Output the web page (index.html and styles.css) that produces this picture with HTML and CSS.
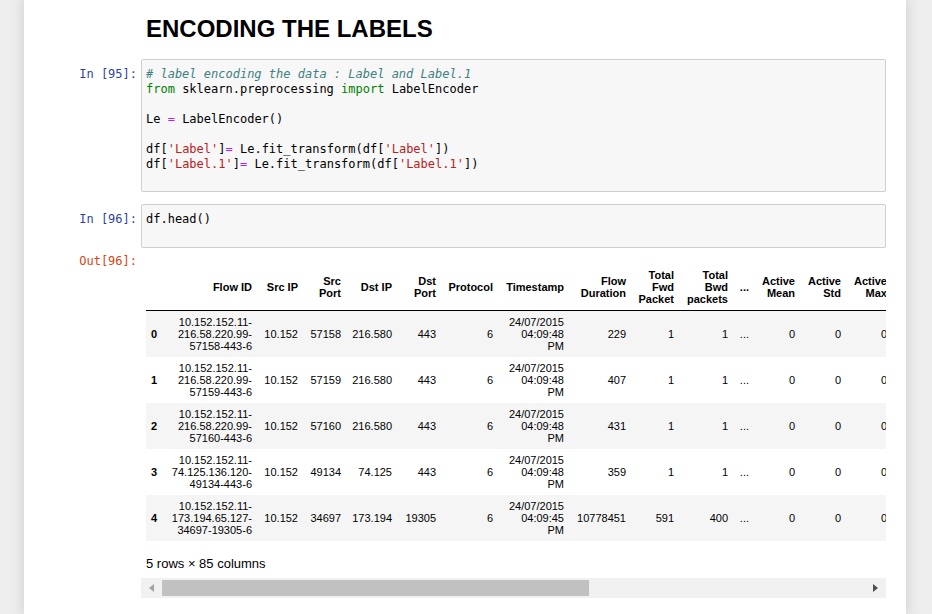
FILE: index.html
```html
<!DOCTYPE html>
<html lang="en">
<head>
<meta charset="utf-8">
<title>Notebook</title>
<link rel="stylesheet" href="styles.css">
</head>
<body>
<div class="notebook">
  <div class="cell md-cell">
    <div class="prompt"></div>
    <div class="area md-area"><h1 class="title">ENCODING THE LABELS</h1></div>
  </div>

  <div class="cell code-cell first">
    <div class="prompt in">In [95]:</div>
    <div class="area input"><pre class="code"><span class="cm">#&nbsp;label encoding the data : Label and Label.1</span>
<span class="kw">from</span> sklearn.preprocessing <span class="kw">import</span> LabelEncoder

Le <span class="op">=</span> LabelEncoder()

df[<span class="st">'Label'</span>]<span class="op">=</span> Le.fit_transform(df[<span class="st">'Label'</span>])
df[<span class="st">'Label.1'</span>]<span class="op">=</span> Le.fit_transform(df[<span class="st">'Label.1'</span>])
&nbsp;</pre></div>
  </div>

  <div class="cell code-cell second">
    <div class="prompt in">In [96]:</div>
    <div class="area input"><pre class="code">df.head()
&nbsp;</pre></div>
  </div>

  <div class="cell out-cell">
    <div class="prompt out">Out[96]:</div>
    <div class="area output">
      <div class="scroll-content">
        <table class="dataframe">
          <colgroup>
            <col class="c0"><col class="c1"><col class="c2"><col class="c3"><col class="c4"><col class="c5"><col class="c6"><col class="c7"><col class="c8"><col class="c9"><col class="c10"><col class="c11"><col class="c12"><col class="c13"><col class="c14">
          </colgroup>
          <thead>
            <tr>
              <th class="idx"></th>
              <th>Flow ID</th>
              <th>Src IP</th>
              <th>Src<br>Port</th>
              <th>Dst IP</th>
              <th>Dst<br>Port</th>
              <th>Protocol</th>
              <th>Timestamp</th>
              <th>Flow<br>Duration</th>
              <th>Total<br>Fwd<br>Packet</th>
              <th>Total<br>Bwd<br>packets</th>
              <th class="dots">...</th>
              <th>Active<br>Mean</th>
              <th>Active<br>Std</th>
              <th>Active<br>Max</th>
            </tr>
          </thead>
          <tbody>
            <tr>
              <th class="idx">0</th>
              <td>10.152.152.11-<br>216.58.220.99-<br>57158-443-6</td>
              <td>10.152</td><td>57158</td><td>216.580</td><td>443</td><td>6</td>
              <td>24/07/2015<br>04:09:48<br>PM</td>
              <td>229</td><td>1</td><td>1</td><td class="dots">...</td><td>0</td><td>0</td><td>0</td>
            </tr>
            <tr>
              <th class="idx">1</th>
              <td>10.152.152.11-<br>216.58.220.99-<br>57159-443-6</td>
              <td>10.152</td><td>57159</td><td>216.580</td><td>443</td><td>6</td>
              <td>24/07/2015<br>04:09:48<br>PM</td>
              <td>407</td><td>1</td><td>1</td><td class="dots">...</td><td>0</td><td>0</td><td>0</td>
            </tr>
            <tr>
              <th class="idx">2</th>
              <td>10.152.152.11-<br>216.58.220.99-<br>57160-443-6</td>
              <td>10.152</td><td>57160</td><td>216.580</td><td>443</td><td>6</td>
              <td>24/07/2015<br>04:09:48<br>PM</td>
              <td>431</td><td>1</td><td>1</td><td class="dots">...</td><td>0</td><td>0</td><td>0</td>
            </tr>
            <tr>
              <th class="idx">3</th>
              <td>10.152.152.11-<br>74.125.136.120-<br>49134-443-6</td>
              <td>10.152</td><td>49134</td><td>74.125</td><td>443</td><td>6</td>
              <td>24/07/2015<br>04:09:48<br>PM</td>
              <td>359</td><td>1</td><td>1</td><td class="dots">...</td><td>0</td><td>0</td><td>0</td>
            </tr>
            <tr>
              <th class="idx">4</th>
              <td>10.152.152.11-<br>173.194.65.127-<br>34697-19305-6</td>
              <td>10.152</td><td>34697</td><td>173.194</td><td>19305</td><td>6</td>
              <td>24/07/2015<br>04:09:45<br>PM</td>
              <td>10778451</td><td>591</td><td>400</td><td class="dots">...</td><td>0</td><td>0</td><td>0</td>
            </tr>
          </tbody>
        </table>
        <p class="shape">5 rows × 85 columns</p>
      </div>
      <div class="hscroll">
        <div class="sb-btn"><span class="arrow-left"></span></div>
        <div class="sb-thumb"></div>
        <div class="sb-space"></div>
        <div class="sb-btn"><span class="arrow-right"></span></div>
      </div>
    </div>
  </div>
</div>
</body>
</html>
```

FILE: styles.css
```css
html, body {
  margin: 0;
  padding: 0;
}
body {
  background: #eeeeee;
  font-family: "Liberation Sans", Arial, sans-serif;
  color: #000;
  height: 614px;
  overflow: hidden;
}
.notebook {
  margin-left: 24px;
  width: 882px;
  min-height: 614px;
  box-sizing: border-box;
  background: #ffffff;
  box-shadow: 0 0 12px 1px rgba(87, 87, 87, 0.2);
  padding: 15px 20px 0 15px;
}
.cell {
  display: flex;
  align-items: flex-start;
}
.prompt {
  width: 98px;
  flex: none;
  margin-right: 4px;
  text-align: right;
  font-family: "DejaVu Sans Mono", monospace;
  font-size: 12px;
  line-height: 15px;
  white-space: nowrap;
}
.prompt.in {
  color: #303f9f;
  padding-top: 8px;
}
.prompt.out {
  color: #d84315;
  padding-top: 1px;
}
.area {
  flex: 1;
  min-width: 0;
}
.md-area {
  padding-left: 5px;
}
.title {
  margin: 0;
  font-size: 24px;
  line-height: 28px;
  font-weight: bold;
  color: #000;
}
.code-cell.first {
  margin-top: 16px;
}
.code-cell.second {
  margin-top: 12px;
}
.input {
  background: #f7f7f7;
  border: 1px solid #cfcfcf;
  border-radius: 2px;
}
.first .input .code {
  padding: 7px 4px 4px 4px;
}
.second .input .code {
  padding: 7px 4px 5px 4px;
}
.code {
  margin: 0;
  font-family: "DejaVu Sans Mono", monospace;
  font-size: 12px;
  line-height: 15px;
  color: #000;
  white-space: pre;
}
.cm { color: #408080; font-style: italic; }
.kw { color: #008000; }
.op { color: #aa22ff; }
.st { color: #ba2121; }

.out-cell {
  margin-top: 5px;
}
.output {
  padding-top: 11px;
}
.scroll-content {
  padding: 0 5px;
  overflow: hidden;
}
.dataframe {
  table-layout: fixed;
  width: 746px;
  border-collapse: collapse;
  border-spacing: 0;
  font-size: 11px;
  color: #000;
}
.c0 { width: 19px; }
.c1 { width: 92px; }
.c2 { width: 46px; }
.c3 { width: 43px; }
.c4 { width: 51px; }
.c5 { width: 44px; }
.c6 { width: 57px; }
.c7 { width: 71px; }
.c8 { width: 62px; }
.c9 { width: 48px; }
.c10 { width: 54px; }
.c11 { width: 21px; }
.c12 { width: 46px; }
.c13 { width: 46px; }
.c14 { width: 46px; }
.dataframe th,
.dataframe td {
  padding: 5px 5px 5px 0;
  line-height: 12px;
  text-align: right;
  vertical-align: middle;
  white-space: nowrap;
  overflow: visible;
}
.dataframe thead th {
  font-weight: bold;
  border-bottom: 1px solid #000;
}
.dataframe tbody tr:nth-child(odd) {
  background: #f5f5f5;
}
.dataframe .idx {
  text-align: left;
  padding-left: 5px;
  font-weight: bold;
}
.dataframe .dots {
  padding-right: 5px;
}
.shape {
  margin: 15px 0 0 0;
  font-size: 13px;
  line-height: 16px;
}
.hscroll {
  margin-top: 6px;
  height: 20px;
  background: #f1f1f1;
  display: flex;
  align-items: stretch;
}
.sb-btn {
  width: 21px;
  flex: none;
  display: flex;
  align-items: center;
  justify-content: center;
}
.sb-thumb {
  width: 427px;
  flex: none;
  margin: 2px 0;
  background: #c1c1c1;
}
.sb-space {
  flex: 1;
}
.arrow-left {
  width: 0;
  height: 0;
  border-top: 4px solid transparent;
  border-bottom: 4px solid transparent;
  border-right: 5px solid #a3a3a3;
}
.arrow-right {
  width: 0;
  height: 0;
  border-top: 4px solid transparent;
  border-bottom: 4px solid transparent;
  border-left: 5px solid #505050;
}
```
